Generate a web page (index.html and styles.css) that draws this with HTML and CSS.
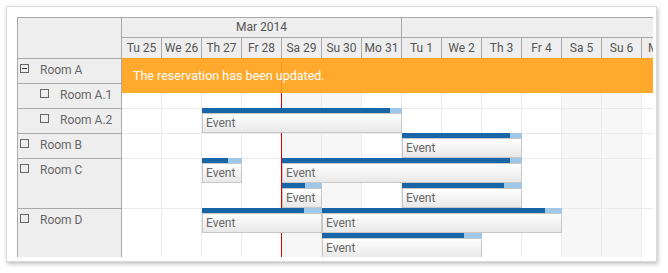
FILE: index.html
```html
<!DOCTYPE html>
<html lang="en">
<head>
    <meta charset="UTF-8">
    <title>Scheduler</title>
    <link rel="stylesheet" href="styles.css">
</head>
<body>
    <div class="frame">
        <div class="scheduler">
            <div class="side">
                <div class="corner"></div>
                <div class="res"><span class="toggle minus"></span>Room A</div>
                <div class="res child"><span class="toggle"></span>Room A.1</div>
                <div class="res child"><span class="toggle"></span>Room A.2</div>
                <div class="res"><span class="toggle"></span>Room B</div>
                <div class="res tall"><span class="toggle"></span>Room C</div>
                <div class="res tall"><span class="toggle"></span>Room D</div>
            </div>

            <div class="main">
                <div class="timeline">
                    <div class="months">
                        <div class="month">Mar 2014</div>
                        <div class="month"></div>
                    </div>
                    <div class="days">
                        <div class="day">Tu 25</div>
                        <div class="day">We 26</div>
                        <div class="day">Th 27</div>
                        <div class="day">Fr 28</div>
                        <div class="day">Sa 29</div>
                        <div class="day">Su 30</div>
                        <div class="day">Mo 31</div>
                        <div class="day">Tu 1</div>
                        <div class="day">We 2</div>
                        <div class="day">Th 3</div>
                        <div class="day">Fr 4</div>
                        <div class="day">Sa 5</div>
                        <div class="day">Su 6</div>
                        <div class="day">Mo 7</div>
                    </div>

                    <div class="lanes">
                        <div class="now"></div>
                        <div class="message">The reservation has been updated.</div>

                        <!-- Room A -->
                        <div class="row"></div>
                        <!-- Room A.1 -->
                        <div class="row"></div>
                        <!-- Room A.2 -->
                        <div class="row">
                            <div class="event" style="left:80px;width:200px"><div class="bar"><div class="done" style="width:188px"></div></div><div class="box">Event</div></div>
                        </div>
                        <!-- Room B -->
                        <div class="row">
                            <div class="event" style="left:280px;width:120px"><div class="bar"><div class="done" style="width:108px"></div></div><div class="box">Event</div></div>
                        </div>
                        <!-- Room C -->
                        <div class="row tall">
                            <div class="event" style="left:80px;width:40px"><div class="bar"><div class="done" style="width:26px"></div></div><div class="box">Event</div></div>
                            <div class="event" style="left:160px;width:240px"><div class="bar"><div class="done" style="width:228px"></div></div><div class="box">Event</div></div>
                            <div class="event lane2" style="left:160px;width:40px"><div class="bar"><div class="done" style="width:23px"></div></div><div class="box">Event</div></div>
                            <div class="event lane2" style="left:280px;width:120px"><div class="bar"><div class="done" style="width:102px"></div></div><div class="box">Event</div></div>
                        </div>
                        <!-- Room D -->
                        <div class="row tall">
                            <div class="event" style="left:80px;width:120px"><div class="bar"><div class="done" style="width:102px"></div></div><div class="box">Event</div></div>
                            <div class="event" style="left:200px;width:240px"><div class="bar"><div class="done" style="width:223px"></div></div><div class="box">Event</div></div>
                            <div class="event lane2" style="left:200px;width:160px"><div class="bar"><div class="done" style="width:142px"></div></div><div class="box">Event</div></div>
                        </div>
                    </div>
                </div>
            </div>
        </div>
    </div>
</body>
</html>
```

FILE: styles.css
```css
body {
    margin: 0;
    font-family: Roboto, 'Liberation Sans', sans-serif;
    font-size: 12px;
    color: #666;
    background-color: #fff;
}

.frame {
    margin: 6px;
    width: 651px;
    height: 256px;
    box-sizing: border-box;
    border: 1px solid #dadada;
    padding: 10px 0 0 10px;
    background-color: #fff;
    box-shadow: 1px 2px 4px rgba(0, 0, 0, 0.25);
}

.scheduler {
    display: flex;
    width: 636px;
    height: 240px;
    box-sizing: border-box;
    overflow: hidden;
    border-top: 1px solid #a9a9a9;
    border-left: 1px solid #a9a9a9;
}

/* resource column */
.side {
    flex: none;
    width: 104px;
    box-sizing: border-box;
    background-color: #eee;
    border-right: 1px solid #a9a9a9;
}

.corner {
    height: 41px;
    box-sizing: border-box;
    border-bottom: 1px solid #a9a9a9;
}

.res {
    display: flex;
    align-items: flex-start;
    height: 25px;
    box-sizing: border-box;
    padding: 4px 0 0 2px;
    border-bottom: 1px solid #a9a9a9;
    line-height: 15px;
}

.res.child {
    padding-left: 22px;
}

.res.tall {
    height: 50px;
}

.toggle {
    position: relative;
    flex: none;
    width: 9px;
    height: 9px;
    box-sizing: border-box;
    margin: 1px 11px 0 0;
    border: 1px solid #666;
}

.toggle.minus::after {
    content: '';
    position: absolute;
    left: 1px;
    top: 3px;
    width: 5px;
    height: 1px;
    background-color: #333;
}

/* time header */
.main {
    flex: 1;
    overflow: hidden;
}

.timeline {
    width: 560px;
}

.months {
    display: grid;
    grid-template-columns: 280px 280px;
    height: 20px;
}

.days {
    display: grid;
    grid-template-columns: repeat(14, 40px);
    height: 21px;
}

.month,
.day {
    box-sizing: border-box;
    background-color: #eee;
    border-right: 1px solid #a9a9a9;
    border-bottom: 1px solid #a9a9a9;
    text-align: center;
    color: #555;
    white-space: nowrap;
    overflow: hidden;
}

.month {
    line-height: 19px;
}

.day {
    line-height: 20px;
}

/* grid body */
.lanes {
    position: relative;
}

.row {
    position: relative;
    height: 25px;
    box-sizing: border-box;
    border-bottom: 1px solid #ebebeb;
    background:
        repeating-linear-gradient(to right, transparent 0 39px, #ebebeb 39px 40px),
        linear-gradient(to right, #fff 160px, #f7f7f7 160px 240px, #fff 240px 440px, #f7f7f7 440px 520px, #fff 520px);
}

.row.tall {
    height: 50px;
}

.now {
    position: absolute;
    left: 159px;
    top: 0;
    bottom: 0;
    width: 1px;
    background-color: #e00000;
    z-index: 1;
}

.message {
    position: absolute;
    left: 0;
    right: 0;
    top: -1px;
    height: 35px;
    box-sizing: border-box;
    padding-left: 11px;
    line-height: 35px;
    font-size: 12.5px;
    background-color: rgba(255, 162, 27, 0.92);
    color: #fff;
    z-index: 3;
}

.event {
    position: absolute;
    top: -1px;
    height: 25px;
    display: flex;
    flex-direction: column;
    z-index: 2;
}

.event.lane2 {
    top: 24px;
}

.bar {
    flex: none;
    height: 5px;
    background-color: #9fc7e8;
}

.done {
    height: 100%;
    background-color: #1866a8;
}

.box {
    flex: 1;
    box-sizing: border-box;
    padding-left: 3px;
    border: 1px solid #c8c8c8;
    background: linear-gradient(#fff, #e8e8e8);
    line-height: 18px;
    color: #666;
    white-space: nowrap;
    overflow: hidden;
}
```
